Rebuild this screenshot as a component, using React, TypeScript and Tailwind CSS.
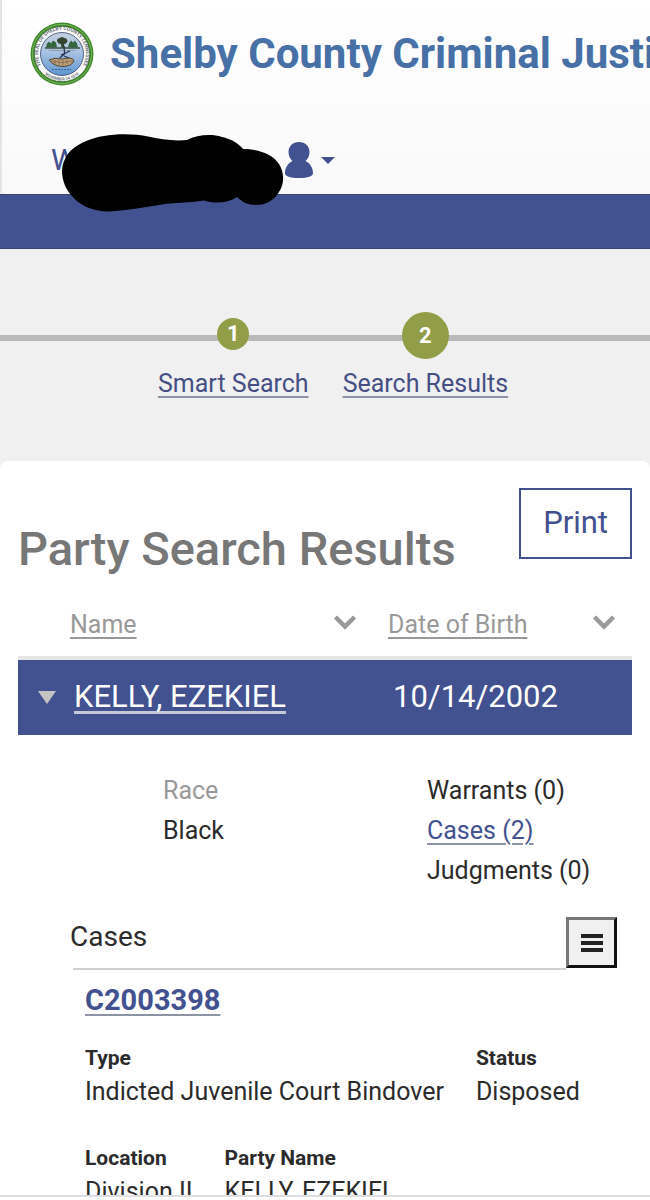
import React, { useState } from 'react';

interface CaseRecord {
  number: string;
  type: string;
  status: string;
  location: string;
  partyName: string;
}

interface Party {
  name: string;
  dob: string;
  race: string;
  warrants: number;
  judgments: number;
  cases: CaseRecord[];
}

const party: Party = {
  name: 'KELLY, EZEKIEL',
  dob: '10/14/2002',
  race: 'Black',
  warrants: 0,
  judgments: 0,
  cases: [
    {
      number: 'C2003398',
      type: 'Indicted Juvenile Court Bindover',
      status: 'Disposed',
      location: 'Division II',
      partyName: 'KELLY, EZEKIEL',
    },
  ],
};

const CountySeal = () => (
  <svg viewBox="0 0 64 64" className="h-16 w-16 shrink-0" role="img" aria-label="Shelby County seal">
    <defs>
      <path id="seal-top" d="M 11.9 45 A 24 24 0 1 1 52.1 45" />
      <path id="seal-bottom" d="M 13 50.5 A 26.5 26.5 0 0 0 51 50.5" />
      <linearGradient id="seal-water" x1="0" y1="0" x2="0" y2="1">
        <stop offset="0" stopColor="#c3cfe0" />
        <stop offset="0.45" stopColor="#a9c3e2" />
        <stop offset="1" stopColor="#5d95cf" />
      </linearGradient>
    </defs>
    <circle cx="32" cy="32" r="31.5" fill="#3d8a2c" />
    <circle cx="32" cy="32" r="29.6" fill="none" stroke="#8cc063" strokeWidth="0.8" />
    <circle cx="32" cy="32" r="27.8" fill="#fafafa" stroke="#2c641f" strokeWidth="0.8" />
    <circle cx="32" cy="32" r="21.5" fill="url(#seal-water)" stroke="#33466b" strokeWidth="0.8" />
    <text className="font-['Roboto',sans-serif]" fontSize="5" fontWeight="500" fill="#555c66">
      <textPath href="#seal-top" startOffset="50%" textAnchor="middle">
        THE SEAL OF SHELBY COUNTY TENNESSEE
      </textPath>
    </text>
    <text className="font-['Roboto',sans-serif]" fontSize="4" fontWeight="500" fill="#555c66">
      <textPath href="#seal-bottom" startOffset="50%" textAnchor="middle">
        NOVEMBER 24 1819
      </textPath>
    </text>
    <path d="M16 25.5 l1 -4 2 -2 2 2 2 -3 3 2 1 5 z" fill="#33663c" />
    <path d="M38 25.5 l1 -4 2 -3 2 2 2 -2 2 3 1 4 z" fill="#33663c" />
    <path d="M27 19 q0 -3 3 -3 q2 -2 4 0 q3 0 3.5 3 q-1 3 -3.5 3 l0.5 4 h-3 l-0.5 -4 q-3 0 -4 -3z" fill="#34442f" />
    <path d="M15 26 h35" stroke="#41513b" strokeWidth="1.6" />
    <path d="M19 28.5 h26" stroke="#8795a3" strokeWidth="0.8" />
    <path d="M34 24 l0.6 8 -5 4 M40 29 l-9 4 M34 34 l5 2" stroke="#27324a" strokeWidth="1.2" fill="none" />
    <path d="M19 38 q6 -3 12 -1 l9 -1 q4 1 4 3 q-2 5 -11 5.500 q-9 0 -14 -6.500z" fill="#b99f78" stroke="#4c3b2e" strokeWidth="0.9" />
    <path d="M21 39 q10 3 22 0 M25 38 v4 M29 38 v5 M33 38 v5 M37 38 v4" stroke="#75583e" strokeWidth="0.6" fill="none" />
    <path d="M22 47.500 h19" stroke="#35679c" strokeWidth="1" strokeDasharray="2 1" />
  </svg>
);

const UserIcon = () => (
  <svg viewBox="0 0 28 36" className="h-9 w-7" fill="#42518f" aria-hidden="true">
    <path d="M14 0 C20 0 24.500 4 24.500 10 C24.500 14.500 22.500 17 20.500 19 C25 21 28 26 28 31 C28 34.500 23 36 14 36 C5 36 0 34.500 0 31 C0 26 3 21 7.500 19 C5.500 17 3.500 14.500 3.500 10 C3.500 4 8 0 14 0 Z" />
  </svg>
);

const Redaction = () => (
  <svg viewBox="0 0 222 78" className="absolute top-[134px] left-[62px] h-[78px] w-[222px]" aria-hidden="true">
    <path
      d="M42 2 C56 -0.500 74 0 86 2.500 C98 5 112 7.500 125 6 C135 1 149 -0.500 160 3 C169 5 176 9 181 15 C196 15 211 20 217 30 C222 38 223 49 217 58 C211 68 202 71 194 71 C186 71 180 68 175 63 C166 69 153 70 142 66.500 C126 69 112 68.500 100 70.500 C84 73 66 76 48 77.500 C31 78 17 71 9 61 C-1 49 -2 34 3 25 C8 13 24 5 42 2 Z"
      fill="#000"
    />
  </svg>
);

const SortIcon = () => (
  <svg viewBox="0 0 24 22" className="h-[22px] w-6 shrink-0" aria-hidden="true">
    <path d="M2.500 3 L12 12.500 L21.500 3" fill="none" stroke="#999" strokeWidth="4.500" />
  </svg>
);

const Header = () => (
  <header className="relative">
    <div className="h-[194px] rounded-bl border-l-2 border-[#e4e4e4] bg-linear-to-b from-white to-[#f9f9f9] pt-[22px]">
      <div className="flex items-center gap-4 overflow-hidden pl-7">
        <CountySeal />
        <h1 className="text-[42px] leading-[58px] font-bold whitespace-nowrap text-[#4670a6]">
          Shelby County Criminal Justice System
        </h1>
      </div>
      <button type="button" className="mt-14 ml-[49px] flex items-center text-[#42518f]">
        <span className="w-[234px] text-left text-[30px] leading-9">W</span>
        <UserIcon />
        <span className="ml-2 border-x-[7px] border-t-[7px] border-x-transparent border-t-[#42518f]" />
      </button>
    </div>
    <nav className="h-[55px] border-y border-[#3a4470] bg-[#42518f]" />
    <Redaction />
  </header>
);

const Stepper = () => (
  <nav aria-label="Progress" className="relative h-[212px] bg-[#f0f0f0] pt-[63px]">
    <div className="absolute top-[86px] h-[6px] w-full bg-[#b9b9b9]" />
    <ol className="relative flex gap-[34px] pl-[158px] text-[25px] leading-[30px] text-[#454f84]">
      <li>
        <a href="#smart-search" className="flex flex-col items-center">
          <span className="flex h-[47px] items-start pt-1.5">
            <span className="flex h-8 w-8 items-center justify-center rounded-full bg-[#929d48] text-[22px] font-bold text-white">1</span>
          </span>
          <span className="mt-2.5 underline decoration-[#8b93a5] decoration-2 underline-offset-4">Smart Search</span>
        </a>
      </li>
      <li>
        <a href="#search-results" className="flex flex-col items-center">
          <span className="flex h-[47px] w-[47px] items-center justify-center rounded-full bg-[#929d48] text-[22px] font-bold text-white">2</span>
          <span className="mt-2.5 underline decoration-[#8b93a5] decoration-2 underline-offset-4">Search Results</span>
        </a>
      </li>
    </ol>
  </nav>
);

const Field: React.FC<{ label: string; value: string }> = ({ label, value }) => (
  <div>
    <dt className="text-[21px] leading-8 font-bold">{label}</dt>
    <dd className="text-[25px] leading-9">{value}</dd>
  </div>
);

const CaseDetails: React.FC<{ record: CaseRecord }> = ({ record }) => (
  <article className="pl-[67px]">
    <a href="#case" className="mt-3 block text-[29px] leading-9 font-bold text-[#42518f] underline decoration-[#8b93a5] decoration-2 underline-offset-4">
      {record.number}
    </a>
    <dl className="mt-6 flex gap-8">
      <Field label="Type" value={record.type} />
      <Field label="Status" value={record.status} />
    </dl>
    <dl className="mt-8 flex gap-8">
      <Field label="Location" value={record.location} />
      <Field label="Party Name" value={record.partyName} />
    </dl>
  </article>
);

const PartyDetails: React.FC<{ data: Party }> = ({ data }) => (
  <>
    <div className="flex pt-9 pl-[145px] text-[25px] leading-10">
      <dl className="w-[264px]">
        <dt className="text-[#999]">Race</dt>
        <dd>{data.race}</dd>
      </dl>
      <ul>
        <li>Warrants ({data.warrants})</li>
        <li>
          <a href="#cases" className="text-[#42518f] underline decoration-[#8b93a5] decoration-2 underline-offset-4">
            Cases (2)
          </a>
        </li>
        <li>Judgments ({data.judgments})</li>
      </ul>
    </div>
    <div className="mt-[26px] mr-[15px] ml-[52px] flex items-start justify-between">
      <h3 className="text-[28px] leading-10">Cases</h3>
      <button
        type="button"
        aria-label="Case options"
        className="flex h-[51px] w-[51px] flex-col items-center justify-center gap-[3px] border-3 border-t-[#777] border-r-[#111] border-b-[#111] border-l-[#777] bg-[#f0f0f0]"
      >
        <span className="h-1 w-[22px] bg-[#222]" />
        <span className="h-1 w-[22px] bg-[#222]" />
        <span className="h-1 w-[22px] bg-[#222]" />
      </button>
    </div>
    <hr className="mr-[66px] ml-[55px] border-t-2 border-[#cfcfcf]" />
    {data.cases.map((record) => (
      <CaseDetails key={record.number} record={record} />
    ))}
  </>
);

const App: React.FC = () => {
  const [expanded, setExpanded] = useState(true);

  return (
    <div className="flex h-screen flex-col overflow-hidden bg-[#f0f0f0] font-['Roboto',sans-serif] text-[#2b2b2b]">
      <Header />
      <Stepper />
      <main className="min-h-0 flex-1 overflow-hidden rounded-t-lg bg-white px-[18px] pt-[27px]">
        <div className="flex items-start justify-between">
          <h2 className="pt-9 text-[47px] leading-[50px] font-medium text-[#777]">Party Search Results</h2>
          <button type="button" className="h-[71px] border-2 border-[#42518f] px-[22px] text-[31px] text-[#42518f]">
            Print
          </button>
        </div>
        <table className="mt-5 w-full table-fixed">
          <thead className="border-b-4 border-[#e6e6e6]">
            <tr className="h-16 text-left text-[25px] text-[#999]">
              <th className="w-[355px] pl-[52px] font-normal">
                <button type="button" className="flex w-full items-center justify-between pr-4">
                  <span className="underline decoration-2 underline-offset-4">Name</span>
                  <SortIcon />
                </button>
              </th>
              <th className="pl-[15px] font-normal">
                <button type="button" className="flex w-full items-center justify-between pr-4">
                  <span className="underline decoration-2 underline-offset-4">Date of Birth</span>
                  <SortIcon />
                </button>
              </th>
            </tr>
          </thead>
          <tbody>
            <tr className="h-[77px] bg-[#42518f] text-[31px] text-white">
              <td className="pl-5">
                <div className="flex items-center gap-[18px]">
                  <button
                    type="button"
                    aria-label="Toggle details"
                    aria-expanded={expanded}
                    onClick={() => setExpanded(!expanded)}
                    className="border-x-[9px] border-t-[13px] border-x-transparent border-t-[#c4c4c4]"
                  />
                  <a href="#party" className="underline decoration-[#c4c8d8] decoration-3 underline-offset-4">
                    {party.name}
                  </a>
                </div>
              </td>
              <td className="pl-5">{party.dob}</td>
            </tr>
            {expanded && (
              <tr>
                <td colSpan={2}>
                  <PartyDetails data={party} />
                </td>
              </tr>
            )}
          </tbody>
        </table>
      </main>
      <footer className="h-[5px] shrink-0 border-t-2 border-[#dddfe3] bg-white" />
    </div>
  );
};

export default App;
